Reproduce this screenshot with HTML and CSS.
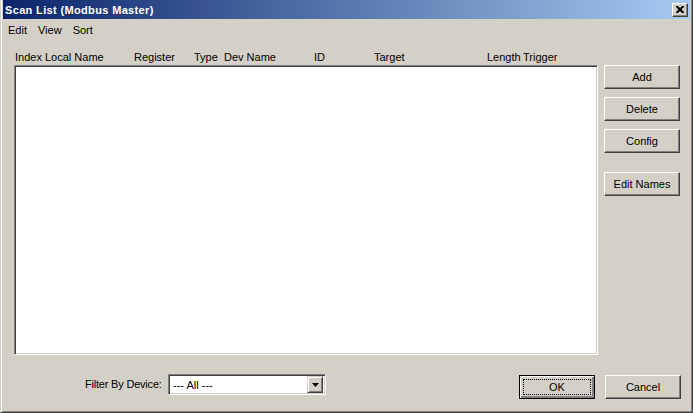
FILE: index.html
```html
<!DOCTYPE html>
<html lang="en">
<head>
    <meta charset="UTF-8">
    <title>Scan List (Modbus Master)</title>
    <link rel="stylesheet" href="styles.css">
</head>
<body>
    <div class="window">
        <div class="titlebar">
            <span class="title">Scan List (Modbus Master)</span>
            <span class="close-btn">
                <svg width="8" height="7" viewBox="0 0 8 7">
                    <path d="M0 0h2l2 2 2-2h2v1l-2.5 2.5L8 6v1H6L4 5 2 7H0V6l2.5-2.5L0 1z" fill="#000"/>
                </svg>
            </span>
        </div>
        <div class="menubar">
            <span class="menu-item">Edit</span>
            <span class="menu-item">View</span>
            <span class="menu-item">Sort</span>
        </div>

        <div class="content">
            <div class="list-area">
                <div class="list-header">
                    <span class="col col-index">Index</span>
                    <span class="col col-local">Local Name</span>
                    <span class="col col-register">Register</span>
                    <span class="col col-type">Type</span>
                    <span class="col col-dev">Dev Name</span>
                    <span class="col col-id">ID</span>
                    <span class="col col-target">Target</span>
                    <span class="col col-length">Length</span>
                    <span class="col col-trigger">Trigger</span>
                </div>
                <div class="listbox"></div>
            </div>
            <div class="side-buttons">
                <button class="btn">Add</button>
                <button class="btn">Delete</button>
                <button class="btn">Config</button>
                <button class="btn btn-gap">Edit Names</button>
            </div>
        </div>

        <div class="footer">
            <label class="filter-label" for="device">Filter By Device:</label>
            <div class="combo" id="device">
                <span class="combo-text">--- All ---</span>
                <span class="combo-arrow">
                    <svg width="7" height="4" viewBox="0 0 7 4"><path d="M0 0h7L3.5 4z" fill="#000"/></svg>
                </span>
            </div>
            <div class="spacer"></div>
            <button class="btn btn-default"><span class="focus">OK</span></button>
            <button class="btn">Cancel</button>
        </div>
    </div>
</body>
</html>
```

FILE: styles.css
```css
:root {
    --face: #d4d0c8;
    --light: #ffffff;
    --shadow: #808080;
    --dark: #404040;
    --ui-font: "Liberation Sans", Arial, sans-serif;
}

* {
    box-sizing: border-box;
    margin: 0;
    padding: 0;
}

body {
    background: var(--face);
    font-family: var(--ui-font);
    font-size: 11px;
    color: #000;
}

.window {
    width: 693px;
    height: 413px;
    background: var(--face);
    border-left: 1px solid var(--face);
    border-right: 1px solid var(--dark);
    border-bottom: 1px solid var(--dark);
    box-shadow: inset 1px 0 var(--light), inset -1px -1px var(--shadow);
    padding: 0 2px 2px 2px;
    display: flex;
    flex-direction: column;
}

/* title bar */
.titlebar {
    height: 19px;
    background: linear-gradient(to right, #0a246a, #a6caf0);
    display: flex;
    align-items: center;
    justify-content: space-between;
    padding: 0 2px 0 2px;
}

.title {
    color: #fff;
    font-weight: bold;
    font-size: 11px;
    letter-spacing: 0.35px;
}

.close-btn {
    width: 16px;
    height: 14px;
    background: var(--face);
    border: 1px solid;
    border-color: var(--light) var(--dark) var(--dark) var(--light);
    box-shadow: inset -1px -1px var(--shadow);
    display: flex;
    align-items: center;
    justify-content: center;
    padding-right: 1px;
}

/* menu */
.menubar {
    height: 21px;
    display: flex;
    align-items: center;
    padding-top: 1px;
}

.menu-item {
    padding: 0 5px 0 5px;
    margin-right: 1px;
}

/* list + side buttons */
.content {
    display: flex;
    padding: 10px 0 0 11px;
    gap: 6px;
}

.list-area {
    width: 584px;
}

.list-header {
    display: flex;
    height: 15px;
    padding: 1px 0 0 1px;
    line-height: 13px;
    white-space: nowrap;
}

.col-index { width: 30px; }
.col-local { width: 89px; }
.col-register { width: 60px; }
.col-type { width: 30px; }
.col-dev { width: 90px; }
.col-id { width: 60px; }
.col-target { width: 113px; }
.col-length { width: 36px; }

.listbox {
    height: 290px;
    background: #fff;
    border: 1px solid;
    border-color: var(--shadow) var(--light) var(--light) var(--shadow);
    box-shadow: inset 1px 1px var(--dark), inset -1px -1px var(--face);
}

.side-buttons {
    display: flex;
    flex-direction: column;
    gap: 8px;
    padding-top: 15px;
}

.btn {
    width: 76px;
    height: 24px;
    background: var(--face);
    font-family: var(--ui-font);
    font-size: 11px;
    color: #000;
    border: 1px solid;
    border-color: var(--light) var(--dark) var(--dark) var(--light);
    box-shadow: inset -1px -1px var(--shadow);
}

.btn-gap {
    margin-top: 11px;
}

.btn-default {
    border: 1px solid #000;
    box-shadow: inset 1px 1px var(--light), inset -2px -2px var(--shadow);
    display: flex;
    align-items: center;
    justify-content: center;
    padding: 3px;
}

.focus {
    display: flex;
    align-items: center;
    justify-content: center;
    width: 100%;
    height: 100%;
    border: 1px dotted #000;
}

/* footer */
.footer {
    display: flex;
    align-items: flex-start;
    padding: 20px 9px 0 82px;
}

.filter-label {
    width: 76px;
    white-space: nowrap;
    margin-top: 3px;
    margin-right: 7px;
    letter-spacing: -0.2px;
}

.combo {
    width: 158px;
    height: 21px;
    margin-top: -1px;
    background: #fff;
    border: 1px solid;
    border-color: var(--shadow) var(--light) var(--light) var(--shadow);
    box-shadow: inset 1px 1px var(--dark), inset -1px -1px var(--face);
    display: flex;
    align-items: center;
    justify-content: space-between;
    padding: 2px 2px 2px 4px;
}

.combo-arrow {
    width: 16px;
    height: 17px;
    background: var(--face);
    border: 1px solid;
    border-color: var(--face) var(--dark) var(--dark) var(--face);
    box-shadow: inset 1px 1px var(--light), inset -1px -1px var(--shadow);
    display: flex;
    align-items: center;
    justify-content: center;
}

.spacer {
    flex: 1;
}

.footer .btn + .btn {
    margin-left: 10px;
}
```
